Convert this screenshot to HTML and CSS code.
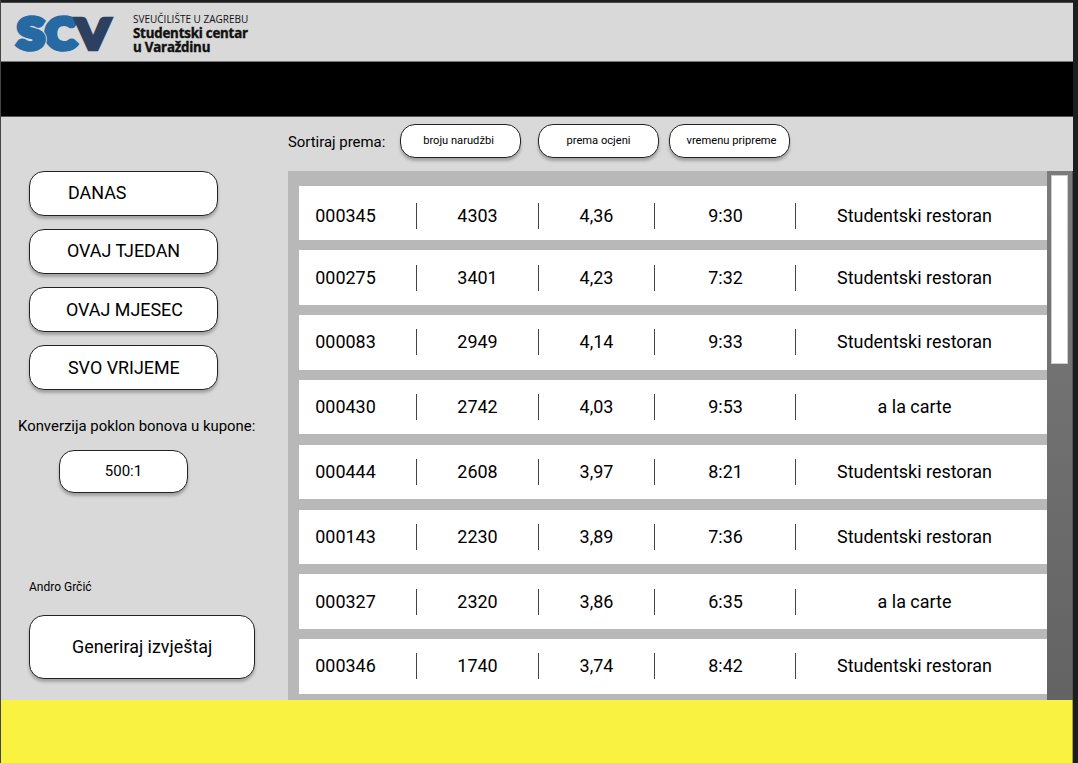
FILE: index.html
```html
<!DOCTYPE html>
<html lang="hr">
<head>
<meta charset="utf-8">
<title>Studentski centar u Varaždinu</title>
<link rel="stylesheet" href="styles.css">
</head>
<body>
<div class="page">
  <header class="header">
    <svg class="logo" width="104" height="44" viewBox="0 0 104 44" role="img" aria-label="SCV">
      <text class="logo-letter logo-blue" transform="translate(34.5 36.9) scale(1.12 1.02)">C</text>
      <text class="logo-letter logo-halo" transform="translate(6.6 36.9) scale(1.18 1.02)">S</text>
      <text class="logo-letter logo-blue" transform="translate(6.6 36.9) scale(1.18 1.02)">S</text>
      <text class="logo-letter logo-navy" transform="translate(65.4 37.2) scale(1.15 1)">V</text>
    </svg>
    <div class="org">
      <span class="org-top">SVEUČILIŠTE U ZAGREBU</span>
      <span class="org-name">Studentski centar</span>
      <span class="org-name">u Varaždinu</span>
    </div>
  </header>
  <nav class="navbar"></nav>
  <main class="main">
    <aside class="sidebar">
      <div class="periods">
        <button class="btn period today">DANAS</button>
        <button class="btn period week">OVAJ TJEDAN</button>
        <button class="btn period month">OVAJ MJESEC</button>
        <button class="btn period all">SVO VRIJEME</button>
      </div>
      <div class="ratio-label">Konverzija poklon bonova u kupone:</div>
      <button class="btn ratio">500:1</button>
      <div class="user">Andro Grčić</div>
      <button class="btn report">Generiraj izvještaj</button>
    </aside>
    <section class="content">
      <div class="sort">
        <span class="sort-label">Sortiraj prema:</span>
        <button class="btn chip orders">broju narudžbi</button>
        <button class="btn chip rating">prema ocjeni</button>
        <button class="btn chip time">vremenu pripreme</button>
      </div>
      <div class="panel">
        <div class="list">
          <div class="row first"><span>000345</span><span>4303</span><span>4,36</span><span>9:30</span><span>Studentski restoran</span></div>
          <div class="row"><span>000275</span><span>3401</span><span>4,23</span><span>7:32</span><span>Studentski restoran</span></div>
          <div class="row"><span>000083</span><span>2949</span><span>4,14</span><span>9:33</span><span>Studentski restoran</span></div>
          <div class="row"><span>000430</span><span>2742</span><span>4,03</span><span>9:53</span><span>a la carte</span></div>
          <div class="row"><span>000444</span><span>2608</span><span>3,97</span><span>8:21</span><span>Studentski restoran</span></div>
          <div class="row"><span>000143</span><span>2230</span><span>3,89</span><span>7:36</span><span>Studentski restoran</span></div>
          <div class="row"><span>000327</span><span>2320</span><span>3,86</span><span>6:35</span><span>a la carte</span></div>
          <div class="row"><span>000346</span><span>1740</span><span>3,74</span><span>8:42</span><span>Studentski restoran</span></div>
        </div>
        <div class="scrollbar"><div class="thumb"></div></div>
      </div>
    </section>
  </main>
  <footer class="footer"></footer>
</div>
</body>
</html>
```
FILE: styles.css
```css
* { box-sizing: border-box; }
body {
  margin: 0;
  height: 763px;
  overflow: hidden;
  background: #1e1e1e;
  font-family: Roboto, "Liberation Sans", sans-serif;
  color: #000;
}
.page {
  width: 1073px;
  height: 763px;
  padding-top: 2px;
  border-left: 1px solid #444;
  display: flex;
  flex-direction: column;
}
.header {
  height: 60px;
  background: #d9d9d9;
  border-top: 1px solid #4a4a4a;
  border-bottom: 1px solid #777;
  display: flex;
  padding: 9px 0 0 10px;
}
.logo { display: block; overflow: visible; }
.logo-letter {
  font-family: Lato, Roboto, sans-serif;
  font-weight: 900;
  font-size: 41px;
  stroke-width: 5.4px;
}
.logo-blue { fill: #2769a3; stroke: #2769a3; }
.logo-halo { fill: #d9d9d9; stroke: #d9d9d9; stroke-width: 7px; }
.logo-navy { fill: #2d4060; stroke: #2d4060; stroke-width: 4.4px; }
.org {
  display: flex;
  flex-direction: column;
  margin-left: 18px;
  font-family: "Open Sans", "Noto Sans", sans-serif;
  color: #111;
  white-space: nowrap;
}
.org-top { font-size: 10px; line-height: 15px; }
.org-name {
  font-size: 13.3px;
  line-height: 13.5px;
  font-weight: 700;
  letter-spacing: -0.2px;
  -webkit-text-stroke: 0.4px #111;
}
.navbar { height: 55px; background: #000; border-bottom: 1px solid #555; }
.main {
  height: 583px;
  background: #d9d9d9;
  display: flex;
}
.sidebar {
  width: 287px;
  padding: 54px 0 0 28px;
  display: flex;
  flex-direction: column;
  align-items: flex-start;
}
.btn {
  display: flex;
  align-items: center;
  margin: 0;
  padding: 0;
  background: #fff;
  border: 1px solid #222;
  border-radius: 15px;
  box-shadow: 0 3px 3px rgba(0, 0, 0, 0.25);
  font-family: inherit;
  color: #000;
  white-space: nowrap;
}
.periods { display: grid; gap: 13px; }
.period { width: 189px; height: 45px; padding-bottom: 2px; font-size: 17.9px; }
.today { padding-left: 38px; }
.week { padding-left: 37px; }
.month { padding: 0 0 1px 36px; }
.all { padding: 0 0 1px 38px; }
.ratio-label {
  margin: 26px 0 0 -11px;
  font-size: 14.9px;
  line-height: 20px;
  white-space: nowrap;
}
.ratio {
  width: 129px;
  height: 43px;
  margin: 14px 0 0 30px;
  padding-bottom: 1px;
  justify-content: center;
  font-size: 15px;
}
.user { margin-top: 86px; font-size: 12px; line-height: 16px; }
.report { width: 226px; height: 64px; margin-top: 20px; padding: 0 0 2px 42px; font-size: 17.9px; }
.content { width: 785px; }
.sort { height: 54px; display: flex; align-items: flex-start; padding-top: 7px; }
.sort-label { width: 112px; font-size: 14.9px; line-height: 36px; }
.chip { width: 121px; height: 34px; padding-bottom: 2px; justify-content: center; font-size: 11.15px; }
.orders { padding-right: 4px; margin-right: 17px; }
.rating { margin-right: 10px; }
.time { padding-left: 4px; }
.panel { height: 529px; background: #b8b8b8; display: flex; justify-content: space-between; }
.list {
  width: 759px;
  padding: 14.7px 0 0 11px;
  display: flex;
  flex-direction: column;
  gap: 10.4px;
}
.row {
  height: 54.4px;
  flex: none;
  display: grid;
  grid-template-columns: 118px 122px 116px 141px 251px;
  align-items: center;
  background: #fff;
  font-size: 17.95px;
}
.row.first { padding-top: 6px; }
.row span {
  height: 26px;
  line-height: 25px;
  text-align: center;
  border-right: 1px solid #444;
}
.row span:first-child { padding-right: 24px; }
.row span:nth-child(4) { padding-left: 1px; }
.row span:last-child { border-right: 0; padding-right: 14px; }
.scrollbar {
  width: 26px;
  padding: 4px 4px 0;
  background: linear-gradient(#7b7b7b, #636363);
  border-right: 1px solid #555;
}
.thumb { height: 189px; background: #fff; border: 1px solid #ccc; }
.footer { flex: 1; background: #f9f240; border-right: 1px solid #aaa43a; }
```
